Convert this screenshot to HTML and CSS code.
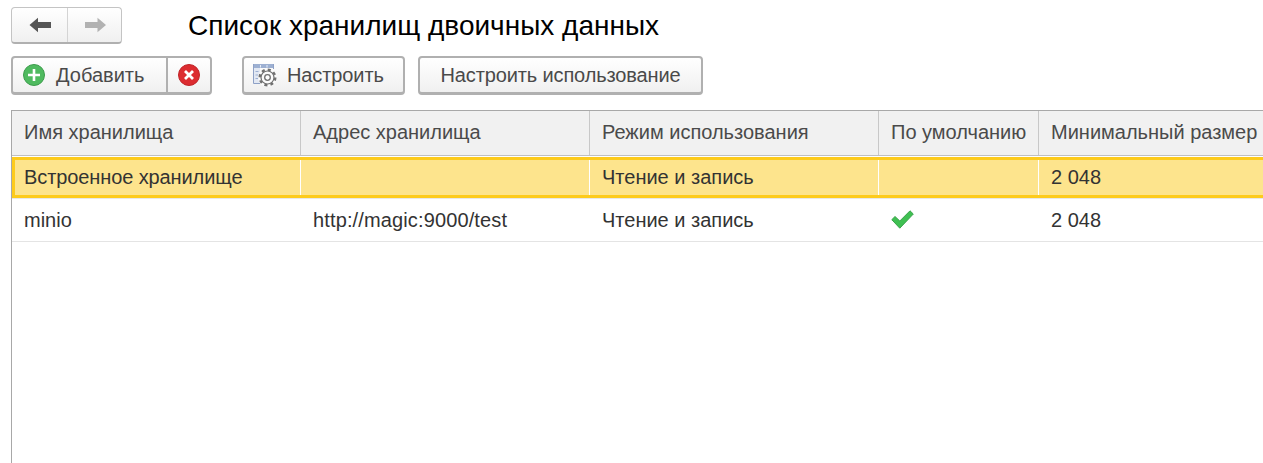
FILE: index.html
```
<!DOCTYPE html>
<html lang="ru">
<head>
<meta charset="utf-8">
<title>Список хранилищ двоичных данных</title>
<link rel="stylesheet" href="styles.css">
</head>
<body>
<header class="title-bar">
  <div class="nav-group">
    <button class="nav-btn nav-back" aria-label="Назад">
      <svg width="24" height="16" viewBox="0 0 24 16"><path d="M1.500 8 L10 .8 V5 H23 V11 H10 V15.200 Z" fill="#555"/></svg>
    </button>
    <button class="nav-btn" aria-label="Вперёд">
      <svg width="24" height="16" viewBox="0 0 24 16"><path d="M23 8 L14.500 .8 V5 H2 V11 H14.500 V15.200 Z" fill="#b2b2b2"/></svg>
    </button>
  </div>
  <h1 class="title">Список хранилищ двоичных данных</h1>
</header>
<div class="toolbar">
  <div class="btn-group">
    <button class="btn btn-add">
      <svg class="icon" width="24" height="24" viewBox="0 0 24 24"><circle cx="12" cy="12" r="10.500" fill="#4fba5f" stroke="#3c9c4b"/><path d="M12 6 V18 M6 12 H18" stroke="#fff" stroke-width="2.600"/></svg>
      Добавить
    </button>
    <button class="btn btn-del" aria-label="Удалить">
      <svg width="24" height="24" viewBox="0 0 24 24"><circle cx="12" cy="12" r="10.500" fill="#dc2c30" stroke="#c02428"/><path d="M8 8 L16 16 M16 8 L8 16" stroke="#fff" stroke-width="2.800"/></svg>
    </button>
  </div>
  <button class="btn btn-set">
    <svg class="icon" width="26" height="26" viewBox="0 0 26 26">
      <path d="M2 2 H21 V6 H2 Z" fill="#9db0d2"/>
      <path d="M8.500 3 V5.500 M15 3 V5.500" stroke="#e8edf6"/>
      <path d="M2 6 H8 V21 H2 Z" fill="#e2e8f3"/>
      <path d="M1.500 2 V21.500 H8 M21.500 2 V7" fill="none" stroke="#8ea1c6"/>
      <path d="M3.500 9.500 H6.500 M3.500 13 H6.500 M3.500 16.500 H6.500" stroke="#9db0d2"/>
      <circle cx="15.500" cy="15.500" r="9.500" fill="#fbfbfb"/>
      <circle cx="15.500" cy="15.500" r="7.800" fill="none" stroke="#707070" stroke-width="2.400" stroke-dasharray="3.060 3.067"/>
      <circle cx="15.500" cy="15.500" r="6.500" fill="#fbfbfb" stroke="#707070" stroke-width="1.200"/>
      <circle cx="15.500" cy="15.500" r="2.800" fill="#fff" stroke="#707070" stroke-width="1.300"/>
    </svg>
    Настроить
  </button>
  <button class="btn btn-use">Настроить использование</button>
</div>
<main class="grid">
  <div class="row head">
    <div class="cell c1">Имя хранилища</div>
    <div class="cell c2">Адрес хранилища</div>
    <div class="cell c3">Режим использования</div>
    <div class="cell c4">По умолчанию</div>
    <div class="cell c5">Минимальный размер</div>
  </div>
  <div class="row selected">
    <div class="cell c1">Встроенное хранилище</div>
    <div class="cell c2"></div>
    <div class="cell c3">Чтение и запись</div>
    <div class="cell c4"></div>
    <div class="cell c5">2 048</div>
  </div>
  <div class="row item">
    <div class="cell c1">minio</div>
    <div class="cell c2 url">http://magic:9000/test</div>
    <div class="cell c3">Чтение и запись</div>
    <div class="cell c4">
      <svg class="check" width="23" height="19" viewBox="0 0 23 19"><path d="M.8 9.700 L4 6.500 L8.800 11 L19 .8 L22.300 4 L8.800 18.200 Z" fill="#3fc052" stroke="#3aa34a" stroke-width="1" stroke-linejoin="round"/></svg>
    </div>
    <div class="cell c5">2 048</div>
  </div>
</main>
</body>
</html>
```
FILE: styles.css
```
* { box-sizing: border-box; }
html, body { margin: 0; height: 100%; overflow: hidden; }
body {
  display: flex;
  flex-direction: column;
  background: #fff;
  font-family: "Liberation Sans", Arial, sans-serif;
  font-size: 20px;
  color: #333;
  padding: 7px 0 0 11px;
}
button { font: inherit; margin: 0; }

.title-bar { display: flex; align-items: center; height: 37px; flex: none; }
.nav-group {
  display: flex;
  width: 111px;
  height: 37px;
  border: 1px solid #c4c4c4;
  border-bottom: 2px solid #b0b0b0;
  border-radius: 4px;
  background: linear-gradient(#fff, #f0f0f0);
}
.nav-btn {
  flex: 1;
  border: 0;
  background: none;
  padding: 0;
  display: flex;
  align-items: center;
  justify-content: center;
}
.nav-back { flex: 0 0 56px; border-right: 1px solid #d4d4d4; }
.title {
  margin: 0 0 0 66px;
  font-size: 28px;
  font-weight: 400;
  color: #000;
  white-space: nowrap;
}

.toolbar { display: flex; margin-top: 12px; height: 39px; flex: none; }
.btn-group { display: flex; margin-right: 30px; }
.btn {
  display: flex;
  align-items: center;
  height: 39px;
  padding: 0;
  border: 2px solid #b0b0b0;
  border-bottom-width: 3px;
  border-radius: 4px;
  background: linear-gradient(#fff, #f0f0f0);
  color: #4a4a4a;
  white-space: nowrap;
}
.icon { flex: none; }
.btn-add { width: 156px; padding-left: 9px; gap: 10px; border-right-width: 1px; border-radius: 4px 0 0 4px; }
.btn-del { width: 45px; justify-content: center; border-left-width: 1px; border-radius: 0 4px 4px 0; }
.btn-set { width: 163px; padding-left: 8px; gap: 9px; margin-right: 13px; letter-spacing: -.1px; }
.btn-use { width: 285px; justify-content: center; letter-spacing: -.13px; }

.grid {
  flex: 1;
  min-height: 0;
  overflow: hidden;
  margin-top: 15px;
  border-top: 1px solid #a8a8a8;
  border-left: 1px solid #a8a8a8;
}
.row { display: flex; width: 1300px; }
.cell {
  flex: none;
  display: flex;
  align-items: center;
  padding-left: 12px;
  white-space: nowrap;
}
.c1, .c2, .c3 { width: 289px; }
.c4 { width: 160px; }
.c5 { width: 260px; }
.url { letter-spacing: .13px; }

.head { height: 45px; background: #f1f1f1; color: #4a4a4a; border-bottom: 1px solid #c0c0c0; }
.head .cell { border-right: 1px solid #c8c8c8; padding-bottom: 2px; }
.selected {
  height: 41px;
  margin-top: 1px;
  background: #fde48d;
  border: solid #fdcb1c;
  border-width: 3px 0;
}
.selected .cell { border-right: 1px solid #fff; height: 100%; }
.selected .c1 { border-left: 3px solid #fdcb1c; padding-left: 9px; letter-spacing: -.1px; }
.item { height: 44px; border-top: 1px solid #e8e8e8; border-bottom: 1px solid #e4e4e4; }
.check { margin-bottom: 1px; }
```
